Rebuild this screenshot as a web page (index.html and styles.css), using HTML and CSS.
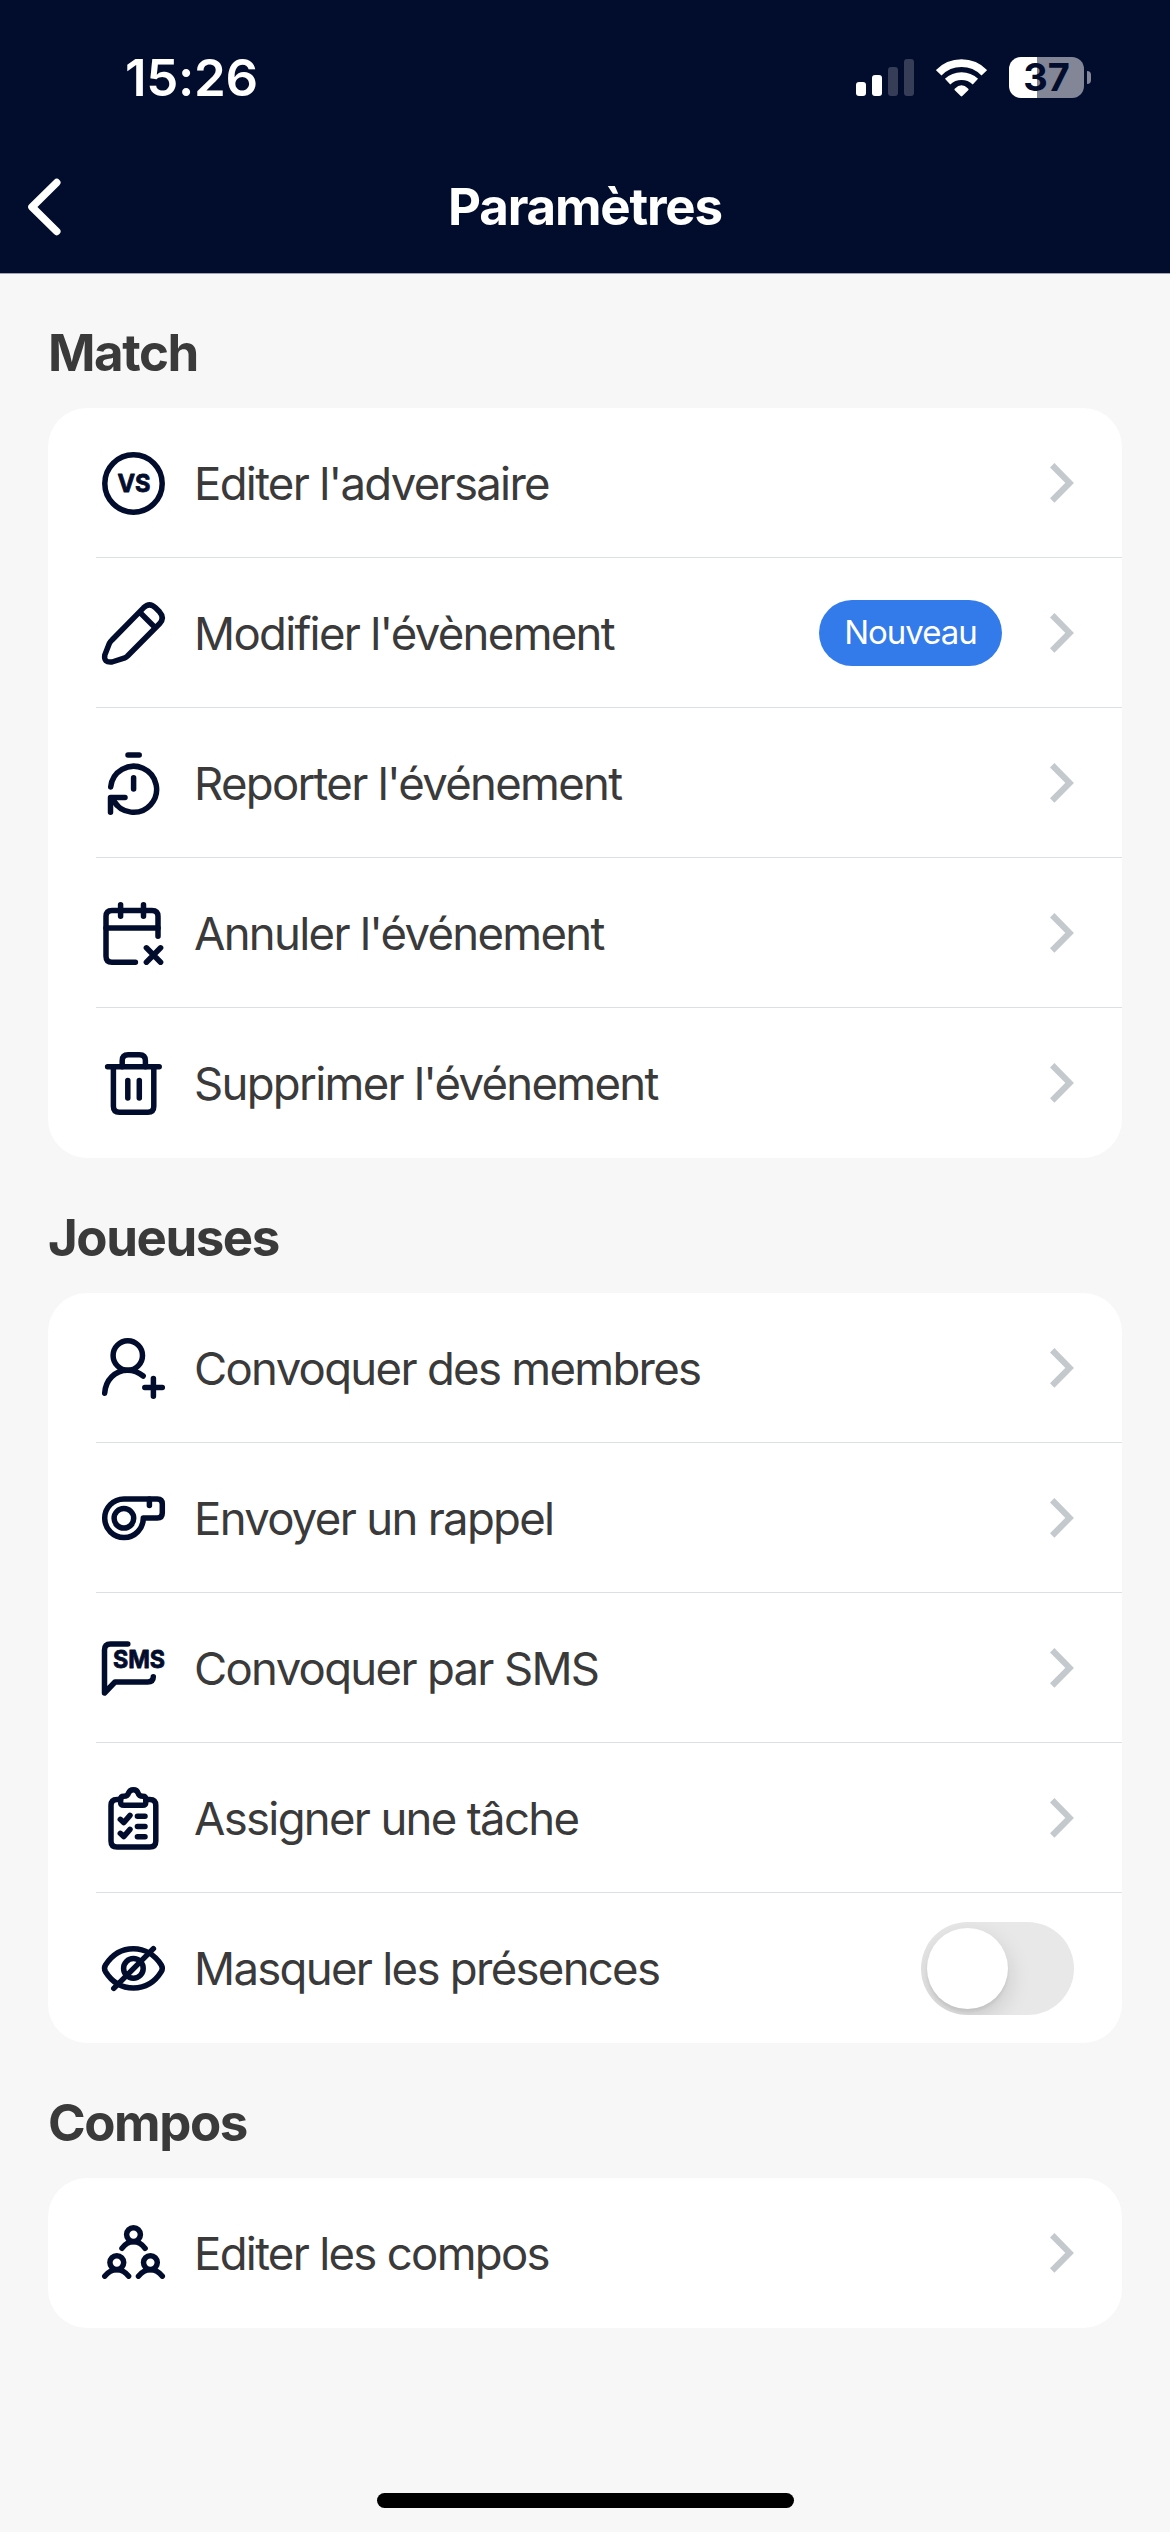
FILE: index.html
```html
<!DOCTYPE html>
<html lang="fr">
<head>
  <meta charset="UTF-8" />
  <meta name="viewport" content="width=device-width, initial-scale=1" />
  <title>Paramètres</title>
  <link rel="stylesheet" href="styles.css">
</head>
<body>
  <header class="header">
    <div class="status-bar">
      <span class="time">15:26</span>
      <div class="status-icons">
        <div class="signal">
          <span class="bar bar-1"></span>
          <span class="bar bar-2"></span>
          <span class="bar bar-3 off"></span>
          <span class="bar bar-4 off"></span>
        </div>
        <svg class="wifi" viewBox="0 0 51 38">
          <path d="M2.7 13.8A31.9 31.9 0 0 1 48.3 13.8" />
          <path d="M11.6 22.7A20.3 20.3 0 0 1 39.4 22.7" />
          <path class="wifi-dot" d="M19 29.6Q25.5 22.8 32 29.6Q33.2 30.4 32.2 31.3L26.3 37Q25.5 37.8 24.7 37L18.8 31.3Q17.8 30.4 19 29.6Z" />
        </svg>
        <div class="battery">
          <div class="battery-body">37</div>
          <div class="battery-tip"></div>
        </div>
      </div>
    </div>
    <nav class="nav">
      <a class="back" href="#" aria-label="Retour">
        <svg viewBox="0 0 36 60"><path d="M29.7 5.6L5 30L29.7 54.4" /></svg>
      </a>
      <h1>Paramètres</h1>
    </nav>
  </header>

  <main class="content">
    <!-- Match -->
    <h2>Match</h2>
    <ul class="card">
      <li class="row">
        <svg class="icon" viewBox="0 0 72 72">
          <circle cx="35.5" cy="36.5" r="28.7" />
          <text x="36" y="45.4" textLength="33" lengthAdjust="spacingAndGlyphs">VS</text>
        </svg>
        <span class="label">Editer l'adversaire</span>
        <svg class="chevron" viewBox="0 0 24 40"><path d="M2.2 2.3L19.6 19.9L2.2 37.5" /></svg>
      </li>
      <li class="row">
        <svg class="icon" viewBox="0 0 72 72">
          <path d="M14 43L45.5 10.8Q51.5 5 57.5 10.8L61.5 14.8Q67 20.8 61.5 26.8L29.5 59Q28.2 60.2 26 61.2L14 65Q5.5 66 6.8 58L11.3 46.5Q12.3 44.5 14 43Z" />
          <path d="M43 16.5L56 29.5" />
        </svg>
        <span class="label">Modifier l'évènement</span>
        <span class="badge">Nouveau</span>
        <svg class="chevron" viewBox="0 0 24 40"><path d="M2.2 2.3L19.6 19.9L2.2 37.5" /></svg>
      </li>
      <li class="row">
        <svg class="icon" viewBox="0 0 72 72">
          <path d="M30 8H41.2M35.6 30.8V42" />
          <path d="M12.7 40A23 23 0 1 1 15.5 53.5" />
          <path d="M12.5 65.2V50.4H27M13 51L19 58" />
        </svg>
        <span class="label">Reporter l'événement</span>
        <svg class="chevron" viewBox="0 0 24 40"><path d="M2.2 2.3L19.6 19.9L2.2 37.5" /></svg>
      </li>
      <li class="row">
        <svg class="icon" viewBox="0 0 72 72">
          <path d="M37.4 65.2H14Q8 65.2 8 59.2V19.5Q8 13.5 14 13.5H54Q60 13.5 60 19.5V39.3" />
          <path d="M22.6 7.7V19.3M45.5 7.7V19.3M8 31H60" />
          <path d="M48.4 50.8L62.6 65.2M62.6 50.8L48.4 65.2" />
        </svg>
        <span class="label">Annuler l'événement</span>
        <svg class="chevron" viewBox="0 0 24 40"><path d="M2.2 2.3L19.6 19.9L2.2 37.5" /></svg>
      </li>
      <li class="row">
        <svg class="icon" viewBox="0 0 72 72">
          <path d="M9.6 19.7H61.2M15.4 19.7V59.2Q15.4 65.2 21.4 65.2H49.8Q55.8 65.2 55.8 59.2V19.7" />
          <path d="M24.2 19.7V13.7Q24.2 7.8 30.2 7.8H41.4Q47.4 7.8 47.4 13.7V19.7" />
          <path d="M29.8 33.4V51M41.3 33.4V51" />
        </svg>
        <span class="label">Supprimer l'événement</span>
        <svg class="chevron" viewBox="0 0 24 40"><path d="M2.2 2.3L19.6 19.9L2.2 37.5" /></svg>
      </li>
    </ul>

    <!-- Joueuses -->
    <h2>Joueuses</h2>
    <ul class="card">
      <li class="row">
        <svg class="icon" viewBox="0 0 72 72">
          <circle cx="29.8" cy="23.5" r="14.7" />
          <path d="M6.7 61.2C7.5 48 17 38.2 29.7 38.2C36 38.2 41.5 41 45.2 44" />
          <path d="M46.8 55.4H64.3M55.4 46.4V64.3" />
        </svg>
        <span class="label">Convoquer des membres</span>
        <svg class="chevron" viewBox="0 0 24 40"><path d="M2.2 2.3L19.6 19.9L2.2 37.5" /></svg>
      </li>
      <li class="row">
        <svg class="icon" viewBox="0 0 72 72">
          <path d="M25.9 16.9H59.3Q64.3 16.9 64.3 21.9V31Q64.3 36 59.3 36H45.3A19.3 19.3 0 1 1 25.9 16.9Z" />
          <circle cx="25.9" cy="36.3" r="9.8" />
          <path d="M51.4 17V23.4" />
        </svg>
        <span class="label">Envoyer un rappel</span>
        <svg class="chevron" viewBox="0 0 24 40"><path d="M2.2 2.3L19.6 19.9L2.2 37.5" /></svg>
      </li>
      <li class="row">
        <svg class="icon" viewBox="0 0 72 72">
          <path d="M29.8 12H12.5Q6.5 12 6.5 18V61L17 50H49.5Q55.3 50 55.3 44.8" />
          <text x="41" y="36.3" textLength="52" lengthAdjust="spacingAndGlyphs">SMS</text>
        </svg>
        <span class="label">Convoquer par SMS</span>
        <svg class="chevron" viewBox="0 0 24 40"><path d="M2.2 2.3L19.6 19.9L2.2 37.5" /></svg>
      </li>
      <li class="row">
        <svg class="icon" viewBox="0 0 72 72">
          <path d="M22.6 17.4H19Q13 17.4 13 23.4V59Q13 65 19 65H51.8Q57.8 65 57.8 59V23.4Q57.8 17.4 51.8 17.4H47.8" />
          <path d="M22.6 17.5Q22.6 14.3 25.8 14.3Q29.6 14.3 30.4 11.3Q31.8 7.7 35.4 7.7Q39 7.7 40.2 11.3Q41 14.3 44.8 14.3Q47.8 14.3 47.8 17.5V20Q47.8 23.3 44.6 23.3H25.8Q22.6 23.3 22.6 20Z" />
          <path d="M22.3 37.3L25.7 40.6L32 33.4M22.3 51.3L25.7 54.6L32 47.4M39.4 34.3H47M39.4 44.6H47M39.4 54.8H47" />
        </svg>
        <span class="label">Assigner une tâche</span>
        <svg class="chevron" viewBox="0 0 24 40"><path d="M2.2 2.3L19.6 19.9L2.2 37.5" /></svg>
      </li>
      <li class="row">
        <svg class="icon" viewBox="0 0 72 72">
          <path d="M7.5 33C14 23 24 16.8 35.4 16.8S57 23 63.3 33Q65.3 36.3 63.3 39.7C57 50 47 56 35.4 56S14 50 7.5 39.7Q5.5 36.3 7.5 33Z" />
          <circle cx="35.4" cy="36.4" r="9.8" />
          <path d="M15.8 56.4L55.4 16.6" />
        </svg>
        <span class="label">Masquer les présences</span>
        <span class="switch"><span class="knob"></span></span>
      </li>
    </ul>

    <!-- Compos -->
    <h2>Compos</h2>
    <ul class="card">
      <li class="row">
        <svg class="icon" viewBox="0 0 72 72">
          <circle cx="35.5" cy="17.6" r="6.9" />
          <path d="M24 31.3C27 27 31 24.7 35.5 24.7S44 27 47.1 31.3" />
          <circle cx="18.8" cy="45.6" r="6.9" />
          <path d="M6.8 59.2C10 55 14 52.7 18.8 52.7S27.5 55 30.6 59.2" />
          <circle cx="52.4" cy="45.6" r="6.9" />
          <path d="M40.5 59.2C43.7 55 47.7 52.7 52.4 52.7S61.2 55 64.3 59.2" />
        </svg>
        <span class="label">Editer les compos</span>
        <svg class="chevron" viewBox="0 0 24 40"><path d="M2.2 2.3L19.6 19.9L2.2 37.5" /></svg>
      </li>
    </ul>
  </main>

  <footer class="footer">
    <div class="home-indicator"></div>
  </footer>
</body>
</html>
```
FILE: styles.css
```css
* {
  margin: 0;
  padding: 0;
  box-sizing: border-box;
  font-family: 'Inter', sans-serif;
}

body {
  background: #f7f7f7;
  color: #3a3a3a;
  display: flex;
  flex-direction: column;
  height: 2532px;
}

/* Header */
.header {
  background: #020c2c;
  color: #fff;
  height: 274px;
  border-bottom: 1px solid #a3a2ae;
}

.status-bar {
  display: flex;
  justify-content: space-between;
  align-items: center;
  height: 141px;
  padding: 14px 79px 0 125px;
}

.time {
  font-size: 51px;
  font-weight: 600;
  letter-spacing: -0.3px;
}

.status-icons {
  display: flex;
  align-items: center;
  gap: 22px;
}

.signal {
  display: flex;
  align-items: flex-end;
  gap: 6px;
  height: 37px;
}

.bar {
  width: 10px;
  border-radius: 3px;
  background: #fff;
}

.bar-1 {
  height: 14px;
}

.bar-2 {
  height: 21px;
}

.bar-3 {
  height: 29px;
}

.bar-4 {
  height: 37px;
}

.bar.off {
  background: #353d57;
}

.wifi {
  width: 51px;
  height: 38px;
  fill: none;
  stroke: #fff;
  stroke-width: 7.8;
}

.wifi-dot {
  fill: #fff;
  stroke: none;
}

.battery {
  display: flex;
  align-items: center;
  gap: 3px;
}

.battery-body {
  width: 75px;
  height: 41px;
  border-radius: 12px;
  background: linear-gradient(to right, #fff 28px, #828697 28px);
  color: #020c2c;
  font-size: 38px;
  font-weight: 650;
  line-height: 41px;
  text-align: center;
}

.battery-tip {
  width: 4px;
  height: 13px;
  border-radius: 0 4px 4px 0;
  background: #828697;
}

.nav {
  display: grid;
  grid-template-columns: 100px 1fr 100px;
  align-items: center;
  height: 132px;
}

.back {
  padding-left: 27px;
  height: 60px;
}

.back svg {
  width: 36px;
  height: 60px;
  fill: none;
  stroke: #fff;
  stroke-width: 7.6;
  stroke-linecap: round;
  stroke-linejoin: round;
}

h1 {
  padding-bottom: 1px;
  font-size: 51px;
  font-weight: 700;
  letter-spacing: -1.2px;
  text-align: center;
}

/* Sections */
.content {
  flex: 1;
  padding: 0 48px;
}

h2 {
  height: 135px;
  padding-top: 49px;
  font-size: 51px;
  font-weight: 700;
  line-height: 62px;
  letter-spacing: -1.45px;
}

h2:first-child {
  height: 134px;
  padding-top: 48px;
}

.card {
  background: #fff;
  border-radius: 39px;
  list-style: none;
}

.row {
  display: flex;
  align-items: center;
  height: 150px;
  margin-left: 48px;
  padding: 0 48px 0 2px;
}

.row:not(:last-child) {
  box-shadow: inset 0 -1px #dcdfe4;
}

.icon {
  width: 72px;
  height: 72px;
  fill: none;
  stroke: #020c2c;
  stroke-width: 5.5;
  stroke-linecap: round;
  stroke-linejoin: round;
}

.icon text {
  fill: #020c2c;
  stroke-width: 0.8;
  font-size: 24px;
  font-weight: 700;
  text-anchor: middle;
}

.label {
  flex: 1;
  margin-left: 24px;
  padding-top: 1px;
  font-size: 45.5px;
  letter-spacing: -1.7px;
}

.badge {
  width: 183px;
  height: 66px;
  margin-right: 48px;
  border-radius: 33px;
  background: #337aea;
  color: #fff;
  font-size: 33px;
  line-height: 64px;
  letter-spacing: -1px;
  text-align: center;
}

.chevron {
  width: 24px;
  height: 40px;
  fill: none;
  stroke: #c4c9ce;
  stroke-width: 6.2;
}

.switch {
  width: 153px;
  height: 93px;
  padding: 6px;
  border-radius: 47px;
  background: #e8e8e8;
  overflow: hidden;
}

.knob {
  display: block;
  width: 81px;
  height: 81px;
  border-radius: 50%;
  background: #fff;
  box-shadow: 0 9px 24px rgba(0, 0, 0, 0.15), 0 3px 3px rgba(0, 0, 0, 0.06);
}

/* Home indicator */
.footer {
  display: flex;
  justify-content: center;
  padding-bottom: 24px;
}

.home-indicator {
  width: 417px;
  height: 15px;
  border-radius: 8px;
  background: #000;
}
```
